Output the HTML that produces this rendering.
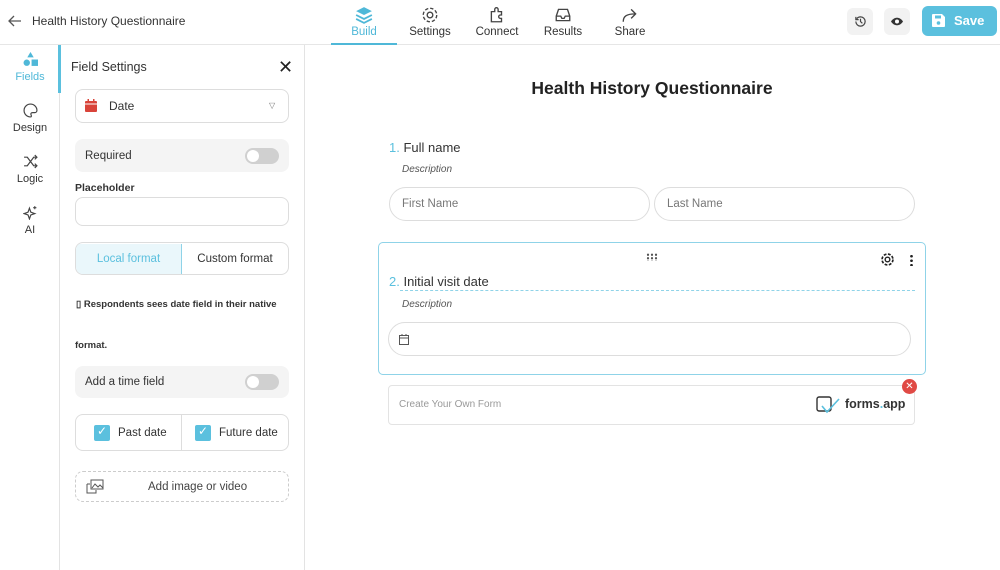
<!DOCTYPE html><html><head><style>
*{box-sizing:border-box;margin:0;padding:0}
body{width:1000px;height:570px;overflow:hidden;background:#fff;font-family:"Liberation Sans",sans-serif;color:#333;position:relative}
.a{position:absolute}
.top{left:0;top:0;width:1000px;height:45px;border-bottom:1px solid #e6e6e6}
.tab{top:0;height:45px;width:66px;text-align:center;font-size:11.5px;color:#333}
.tab svg{display:block;margin:6px auto 2px}
.rail{left:0;top:45px;width:60px;height:525px;border-right:1px solid #e3e3e3}
.ri{width:60px;text-align:center;font-size:11px;color:#333}
.ri svg{display:block;margin:0 auto 4px}
.panel{left:60px;top:45px;width:245px;height:525px;border-right:1px solid #e3e3e3}
.box{border:1px solid #ddd;border-radius:8px;background:#fff}
.gray{background:#f4f4f4;border-radius:8px}
.tog{width:34px;height:16px;border-radius:8px;background:#d0d0d0}
.tog::after{content:"";position:absolute;left:2px;top:2px;width:12px;height:12px;border-radius:6px;background:#fff}
.cb{width:16px;height:16px;background:#5bc0de;border-radius:2px}
</style></head><body>
<div class="a top"></div>
<svg class="a" style="left:8px;top:15px" width="14" height="12" viewBox="0 0 14 12"><path d="M13 6H1M6 1L1 6l5 5" stroke="#555" stroke-width="1.3" fill="none"/></svg>
<div class="a" style="left:32px;top:14px;font-size:12px;color:#333">Health History Questionnaire</div>
<div class="a tab" style="left:331px;color:#4fb8d8;border-bottom:2px solid #4fb8d8"><svg width="18" height="18" viewBox="0 0 16 16"><path d="M8 1l7 3.5-7 3.5-7-3.5z" fill="#4fb8d8"/><path d="M1 8l7 3.5L15 8M1 11.5l7 3.5 7-3.5" stroke="#4fb8d8" stroke-width="1.6" fill="none"/></svg>Build</div>
<div class="a tab" style="left:397px"><svg width="18" height="18" viewBox="0 0 16 16"><circle cx="8" cy="8" r="2.5" stroke="#444" fill="none" stroke-width="1.2"/><circle cx="8" cy="8" r="6" stroke="#444" fill="none" stroke-width="1.2" stroke-dasharray="3 1.7"/></svg>Settings</div>
<div class="a tab" style="left:464px"><svg width="18" height="18" viewBox="0 0 16 16"><path d="M3 5h3V3a1.5 1.5 0 013 0v2h3v3h-1a1.5 1.5 0 000 3h1v3H3z" stroke="#444" fill="none" stroke-width="1.2"/></svg>Connect</div>
<div class="a tab" style="left:530px"><svg width="18" height="18" viewBox="0 0 16 16"><path d="M2 9l2-6h8l2 6v4H2zM2 9h4l1 2h2l1-2h4" stroke="#444" fill="none" stroke-width="1.2"/></svg>Results</div>
<div class="a tab" style="left:597px"><svg width="18" height="18" viewBox="0 0 16 16"><path d="M2 14c0-5 3-7 11-7M9 3l4 4-4 4" stroke="#444" fill="none" stroke-width="1.2"/></svg>Share</div>
<div class="a" style="left:847px;top:8px;width:26px;height:27px;background:#f2f2f2;border-radius:6px"><svg style="margin:7px" width="13" height="13" viewBox="0 0 14 14"><path d="M2 7a5 5 0 105-5 5 5 0 00-4 2M2 2v3h3M7 4v3l2 2" stroke="#444" fill="none" stroke-width="1.3"/></svg></div>
<div class="a" style="left:884px;top:8px;width:26px;height:27px;background:#f2f2f2;border-radius:6px"><svg style="margin:8px 6px" width="14" height="11" viewBox="0 0 14 10"><path d="M1 5c3-5 9-5 12 0-3 5-9 5-12 0z" fill="#333"/><circle cx="7" cy="5" r="2" fill="#fff"/></svg></div>
<div class="a" style="left:922px;top:6px;width:75px;height:30px;background:#5bc0de;border-radius:6px;color:#fff;font-weight:bold;font-size:13px;line-height:30px;padding-left:32px">Save<svg class="a" style="left:10px;top:8px" width="13" height="13" viewBox="0 0 13 13"><path d="M0 1a1 1 0 011-1h9l3 3v9a1 1 0 01-1 1H1a1 1 0 01-1-1z" fill="#fff"/><rect x="3" y="1.5" width="6" height="3" fill="#5bc0de"/><circle cx="6.5" cy="9" r="1.8" fill="#5bc0de"/></svg></div>

<div class="a rail"></div>
<div class="a" style="left:58px;top:45px;width:3px;height:48px;background:#5bc0de"></div>
<div class="a ri" style="left:0;top:52px;color:#4fb8d8"><svg width="15" height="15" viewBox="0 0 14 14"><path d="M7 0l3 5H4z" fill="#4fb8d8"/><circle cx="3.5" cy="10" r="3" fill="#4fb8d8"/><rect x="8" y="7" width="6" height="6" fill="#4fb8d8"/></svg>Fields</div>
<div class="a ri" style="left:0;top:103px"><svg width="15" height="15" viewBox="0 0 14 14"><path d="M7 1a6 6 0 100 12c1 0 1-1 .5-2s0-2 1.5-2h2a2 2 0 002-2A6 6 0 007 1z" stroke="#444" fill="none" stroke-width="1.1"/></svg>Design</div>
<div class="a ri" style="left:0;top:154px"><svg width="15" height="15" viewBox="0 0 14 14"><path d="M1 3h3l6 8h3M1 11h3l6-8h3M11 1l2 2-2 2M11 9l2 2-2 2" stroke="#444" fill="none" stroke-width="1.1"/></svg>Logic</div>
<div class="a ri" style="left:0;top:205px"><svg width="15" height="15" viewBox="0 0 14 14"><path d="M6 3l1.3 3.7L11 8l-3.7 1.3L6 13l-1.3-3.7L1 8l3.7-1.3z" stroke="#444" fill="none" stroke-width="1.1"/><path d="M11 1v3M9.5 2.5h3" stroke="#444"/></svg>AI</div>

<div class="a panel"></div>
<div class="a" style="left:71px;top:60px;font-size:12.5px;color:#333">Field Settings</div>
<div class="a" style="left:278px;top:57px;font-size:18px;color:#222">✕</div>
<div class="a box" style="left:75px;top:89px;width:214px;height:34px"></div>
<svg class="a" style="left:85px;top:99px" width="12" height="13" viewBox="0 0 12 13"><rect x="0" y="2" width="12" height="11" rx="1" fill="#d9443a"/><rect x="2.5" y="0" width="1.5" height="3" fill="#d9443a"/><rect x="8" y="0" width="1.5" height="3" fill="#d9443a"/><rect x="0" y="4.5" width="12" height="1" fill="#fff"/></svg>
<div class="a" style="left:109px;top:99px;font-size:12px">Date</div>
<div class="a" style="left:269px;top:101px;font-size:8px;color:#777">▽</div>
<div class="a gray" style="left:75px;top:139px;width:214px;height:33px"></div>
<div class="a" style="left:85px;top:150px;font-size:11.5px">Required</div>
<div class="a tog" style="left:245px;top:148px"></div>
<div class="a" style="left:75px;top:182px;font-size:10.5px;font-weight:bold">Placeholder</div>
<div class="a box" style="left:75px;top:197px;width:214px;height:29px"></div>
<div class="a box" style="left:75px;top:242px;width:214px;height:33px;overflow:hidden"><div class="a" style="left:0;top:1px;width:106px;height:31px;background:#eaf7fb;border-right:1px solid #8fd3e8;color:#5bc0de;font-size:11.5px;text-align:center;line-height:31px">Local format</div><div class="a" style="left:106px;top:1px;width:106px;height:31px;font-size:11.5px;text-align:center;line-height:31px">Custom format</div></div>
<div class="a" style="left:76px;top:299px;font-size:9.5px;font-weight:bold;color:#333">▯ Respondents sees date field in their native</div>
<div class="a" style="left:75px;top:340px;font-size:9.5px;font-weight:bold">format.</div>
<div class="a gray" style="left:75px;top:366px;width:214px;height:32px"></div>
<div class="a" style="left:85px;top:376px;font-size:11.5px">Add a time field</div>
<div class="a tog" style="left:245px;top:374px"></div>
<div class="a box" style="left:75px;top:414px;width:214px;height:37px"></div>
<div class="a" style="left:181px;top:415px;width:1px;height:35px;background:#ddd"></div>
<div class="a cb" style="left:94px;top:425px"></div><div class="a" style="left:97px;top:424px;color:#fff;font-size:12px">✓</div>
<div class="a" style="left:118px;top:427px;font-size:11.5px">Past date</div>
<div class="a cb" style="left:195px;top:425px"></div><div class="a" style="left:198px;top:424px;color:#fff;font-size:12px">✓</div>
<div class="a" style="left:219px;top:427px;font-size:11.5px">Future date</div>
<div class="a" style="left:75px;top:471px;width:214px;height:31px;border:1px dashed #ccc;border-radius:8px"></div>
<svg class="a" style="left:86px;top:479px" width="18" height="15" viewBox="0 0 18 15"><rect x="5" y="1" width="12" height="9" stroke="#555" fill="none"/><path d="M6 9l3-4 3 3 2-2 3 3" stroke="#555" fill="none"/><path d="M1 5h3M1 5v9h9v-3" stroke="#555" fill="none"/></svg>
<div class="a" style="left:148px;top:481px;font-size:11.5px;color:#444">Add image or video</div>

<div class="a" style="left:305px;top:78px;width:694px;text-align:center;font-size:17.5px;font-weight:bold;color:#222">Health History Questionnaire</div>
<div class="a" style="left:389px;top:140px;font-size:13px"><span style="color:#5bc0de">1.</span> Full name</div>
<div class="a" style="left:402px;top:164px;font-size:10px;font-style:italic;color:#555">Description</div>
<div class="a" style="left:389px;top:187px;width:261px;height:34px;border:1px solid #ddd;border-radius:17px;font-size:11.5px;color:#777;line-height:32px;padding-left:12px">First Name</div>
<div class="a" style="left:654px;top:187px;width:261px;height:34px;border:1px solid #ddd;border-radius:17px;font-size:11.5px;color:#777;line-height:32px;padding-left:12px">Last Name</div>
<div class="a" style="left:378px;top:242px;width:548px;height:133px;border:1px solid #8fd3e8;border-radius:5px"></div>
<div class="a" style="left:646px;top:253px;width:12px;height:8px;background:radial-gradient(circle,#555 1px,transparent 1.3px) 0 0/4px 3.5px"></div>
<svg class="a" style="left:880px;top:252px" width="15" height="15" viewBox="0 0 16 16"><circle cx="8" cy="8" r="2.5" stroke="#222" fill="none" stroke-width="1.5"/><circle cx="8" cy="8" r="5.8" stroke="#222" fill="none" stroke-width="1.8" stroke-dasharray="3 1.6"/></svg>
<div class="a" style="left:910px;top:254px;width:3px;height:12px;background:radial-gradient(circle,#222 1.2px,transparent 1.5px) 0 0/3px 4.5px"></div>
<div class="a" style="left:389px;top:274px;font-size:13px"><span style="color:#5bc0de">2.</span> Initial visit date</div>
<div class="a" style="left:400px;top:290px;width:515px;border-top:1px dashed #8fd3e8"></div>
<div class="a" style="left:402px;top:299px;font-size:10px;font-style:italic;color:#555">Description</div>
<div class="a" style="left:388px;top:322px;width:523px;height:34px;border:1px solid #ddd;border-radius:17px"></div>
<svg class="a" style="left:399px;top:334px" width="10" height="11" viewBox="0 0 10 11"><rect x=".5" y="1.5" width="9" height="9" stroke="#555" fill="none"/><path d="M.5 4h9M3 0v2M7 0v2" stroke="#555"/></svg>
<div class="a" style="left:388px;top:385px;width:527px;height:40px;border:1px solid #e3e3e3;border-radius:4px"></div>
<div class="a" style="left:399px;top:399px;font-size:10px;color:#999">Create Your Own Form</div>
<svg class="a" style="left:816px;top:396px" width="26" height="19" viewBox="0 0 26 19"><rect x="1" y="1" width="14" height="14" rx="2" stroke="#333" fill="none" stroke-width="1.4"/><path d="M6 10l5 6 12-13" stroke="#5bc0de" fill="none" stroke-width="1.6"/></svg>
<div class="a" style="left:845px;top:397px;font-size:12.5px;font-weight:bold;color:#333">forms<span style="color:#5bc0de">.</span>app</div>
<div class="a" style="left:902px;top:379px;width:15px;height:15px;border-radius:8px;background:#e04a45;color:#fff;font-size:10px;text-align:center;line-height:15px">✕</div>
</body></html>
